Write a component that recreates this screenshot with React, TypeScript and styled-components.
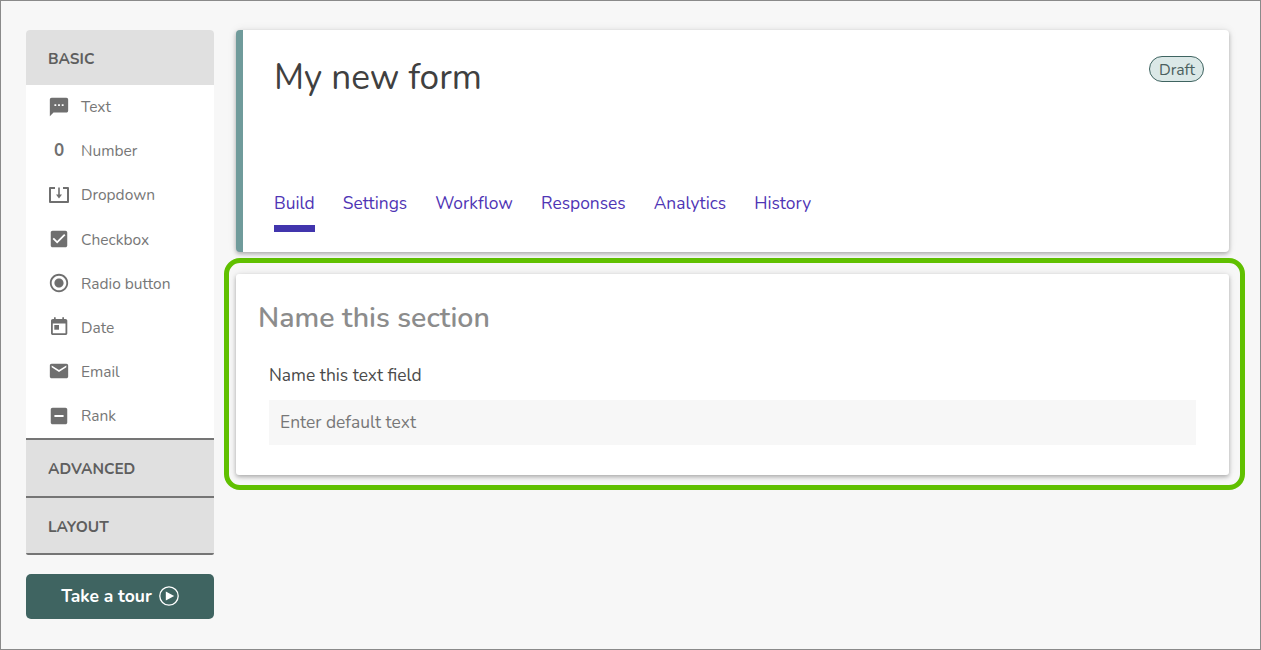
import React from "react";
import styled, { createGlobalStyle } from "styled-components";

const Global = createGlobalStyle`
  html, body { margin: 0; padding: 0; background: #f7f7f7; }
  * { box-sizing: border-box; }
`;

const FONT = `"Nunito", "Lato", "Noto Sans", "Liberation Sans", sans-serif`;
const SHADOW = "0 2px 4px rgba(0, 0, 0, 0.28), 0 0 10px rgba(0, 0, 0, 0.08)";

const Page = styled.div`
  width: 1261px;
  height: 650px;
  border: 1px solid #8a8a8a;
  background: #f7f7f7;
  display: flex;
  align-items: flex-start;
  padding: 29px 0 0 25px;
  font-family: ${FONT};
  overflow: hidden;
`;

const Sidebar = styled.aside`
  width: 188px;
  flex: none;
  display: flex;
  flex-direction: column;
`;

const Accordion = styled.div`
  border-radius: 4px 4px 2px 2px;
  overflow: hidden;
  background: #fff;
`;

const SectionHead = styled.div<{ $h: number; $line?: boolean }>`
  height: ${(p) => p.$h}px;
  background: #e0e0e0;
  padding: 1px 0 0 22px;
  display: flex;
  align-items: center;
  font-size: 15.4px;
  font-weight: 700;
  color: #5e5e5e;
  border-top: ${(p) => (p.$line ? "2px solid #757575" : "none")};
`;

const BottomRule = styled.div`
  height: 2px;
  background: #757575;
`;

const ItemRow = styled.div`
  height: 44.125px;
  display: flex;
  align-items: center;
  padding: 0 0 0.75px 22px;
  gap: 11px;
  font-size: 15.5px;
  color: #777;
`;

const IconSlot = styled.span`
  width: 22px;
  height: 22px;
  flex: none;
  display: flex;
  align-items: center;
  justify-content: center;
  color: #6f6f6f;
  font-weight: 700;
  font-size: 17px;
  svg { display: block; }
`;

const TourButton = styled.button`
  margin-top: 19px;
  height: 45px;
  border: none;
  border-radius: 5px;
  background: #3f6461;
  color: #fff;
  font-family: ${FONT};
  font-size: 17.5px;
  font-weight: 700;
  display: flex;
  align-items: center;
  justify-content: center;
  gap: 7px;
  padding: 0 0 2px;
`;

const Main = styled.main`
  flex: none;
  width: 1021px;
  margin-left: 10px;
  display: flex;
  flex-direction: column;
`;

const HeaderCard = styled.section`
  position: relative;
  margin: 0 16px 0 12px;
  height: 222px;
  background: #fff;
  border-left: 7px solid #709b9b;
  border-radius: 4px;
  box-shadow: ${SHADOW};
  padding: 26px 0 20px 31px;
  display: flex;
  flex-direction: column;
`;

const Title = styled.h1`
  margin: 0;
  font-size: 35.2px;
  line-height: 42px;
  font-weight: 400;
  color: #404040;
  flex: 1;
`;

const Badge = styled.span`
  position: absolute;
  top: 26px;
  right: 25px;
  height: 26px;
  padding: 1px 8px 0 9px;
  display: flex;
  align-items: center;
  border: 1px solid #3f6461;
  border-radius: 13px;
  background: #dbe8e7;
  color: #4b5f5e;
  font-size: 15.8px;
`;

const Tabs = styled.nav`
  display: flex;
  gap: 28px;
`;

const Tab = styled.a<{ $active?: boolean }>`
  height: 49px;
  font-size: 17.4px;
  line-height: 24px;
  padding-top: 8px;
  color: #4f35b5;
  border-bottom: 7px solid ${(p) => (p.$active ? "#4135ad" : "transparent")};
`;

const Highlight = styled.div`
  margin-top: 6px;
  height: 232px;
  border: 5px solid #60c000;
  border-radius: 16px;
  padding: 11px 11px 10px 7px;
`;

const SectionCard = styled.section`
  height: 201px;
  background: #fff;
  border-radius: 3px;
  box-shadow: ${SHADOW};
  padding: 26px 33px 0 22px;
`;

const SectionTitle = styled.h2`
  margin: 0;
  font-size: 28.5px;
  line-height: 36px;
  font-weight: 600;
  color: #8c8c8c;
`;

const Field = styled.div`
  margin: 27px 0 0 11px;
`;

const FieldLabel = styled.div`
  font-size: 17.4px;
  line-height: 24px;
  color: #4a4a4a;
`;

const FieldInput = styled.div`
  margin-top: 13px;
  height: 45px;
  background: #f7f7f7;
  padding: 0 0 2px 11px;
  display: flex;
  align-items: center;
  font-size: 17.4px;
  color: #777;
`;

const Ico = ({ children }: { children: React.ReactNode }) => (
  <svg width={22} height={22} viewBox="0 0 24 24" fill="currentColor">
    {children}
  </svg>
);

const DropdownIcon = () => (
  <svg width={22} height={22} viewBox="0 0 22 22" fill="none" stroke="currentColor" strokeWidth="2" strokeLinejoin="round">
    <path d="M7 4H2V18H20V4H15" />
    <path d="M11 3.500V11" strokeWidth="1.600" />
    <path d="M8 10.500H14L11 14.500Z" fill="currentColor" stroke="none" />
  </svg>
);

const DateIcon = () => (
  <svg width={22} height={22} viewBox="0 0 22 22" fill="currentColor">
    <path
      fillRule="evenodd"
      d="M6 1.300h1.700V3h6.600V1.300H16V3h1.500c1 0 1.800.8 1.800 1.800v12.400c0 1-.8 1.800-1.800 1.800H4.800C3.800 19 3 18.200 3 17.200V4.800C3 3.800 3.800 3 4.800 3H6V1.300zM4.800 7.500v9.700h12.700V7.500H4.800z"
    />
    <rect x="6.300" y="9" width="4.700" height="4.700" />
  </svg>
);

const items: [string, React.ReactNode][] = [
  ["Text", <Ico><path d="M20 2H4c-1.100 0-2 .9-2 2v18l4-4h14c1.100 0 2-.9 2-2V4c0-1.100-.9-2-2-2zM9 11H7V9h2v2zm4 0h-2V9h2v2zm4 0h-2V9h2v2z" /></Ico>],
  ["Number", "0"],
  ["Dropdown", <DropdownIcon />],
  ["Checkbox", <Ico><path d="M19 3H5c-1.110 0-2 .9-2 2v14c0 1.100.89 2 2 2h14c1.110 0 2-.9 2-2V5c0-1.100-.89-2-2-2zm-9 14l-5-5 1.410-1.410L10 14.170l7.590-7.590L19 8l-9 9z" /></Ico>],
  ["Radio button", <Ico><path d="M12 7c-2.760 0-5 2.240-5 5s2.240 5 5 5 5-2.240 5-5-2.240-5-5-5zm0-5C6.480 2 2 6.480 2 12s4.480 10 10 10 10-4.480 10-10S17.520 2 12 2zm0 18c-4.420 0-8-3.580-8-8s3.580-8 8-8 8 3.580 8 8-3.580 8-8 8z" /></Ico>],
  ["Date", <DateIcon />],
  ["Email", <Ico><path d="M20 4H4c-1.100 0-1.990.9-1.990 2L2 18c0 1.100.9 2 2 2h16c1.100 0 2-.9 2-2V6c0-1.100-.9-2-2-2zm0 4l-8 5-8-5V6l8 5 8-5v2z" /></Ico>],
  ["Rank", <Ico><path d="M19 3H5c-1.100 0-2 .9-2 2v14c0 1.100.9 2 2 2h14c1.100 0 2-.9 2-2V5c0-1.100-.9-2-2-2zm-2 10H7v-2h10v2z" /></Ico>],
];

const tabs = ["Build", "Settings", "Workflow", "Responses", "Analytics", "History"];

export default function App() {
  return (
    <Page>
      <Global />
      <Sidebar>
        <Accordion>
          <SectionHead $h={55}>BASIC</SectionHead>
          {items.map(([label, icon]) => (
            <ItemRow key={label}>
              <IconSlot>{icon}</IconSlot>
              {label}
            </ItemRow>
          ))}
          <SectionHead $h={58} $line>ADVANCED</SectionHead>
          <SectionHead $h={57} $line>LAYOUT</SectionHead>
          <BottomRule />
        </Accordion>
        <TourButton>
          Take a tour
          <svg width="20" height="20" viewBox="0 0 20 20" fill="none">
            <circle cx="10" cy="10" r="9.200" stroke="#fff" strokeWidth="1.300" />
            <path d="M6.800 5.500L15.200 10L6.800 14.500Z" fill="#fff" />
          </svg>
        </TourButton>
      </Sidebar>
      <Main>
        <HeaderCard>
          <Title>My new form</Title>
          <Badge>Draft</Badge>
          <Tabs>
            {tabs.map((t, i) => (
              <Tab key={t} $active={i === 0}>{t}</Tab>
            ))}
          </Tabs>
        </HeaderCard>
        <Highlight>
          <SectionCard>
            <SectionTitle>Name this section</SectionTitle>
            <Field>
              <FieldLabel>Name this text field</FieldLabel>
              <FieldInput>Enter default text</FieldInput>
            </Field>
          </SectionCard>
        </Highlight>
      </Main>
    </Page>
  );
}
